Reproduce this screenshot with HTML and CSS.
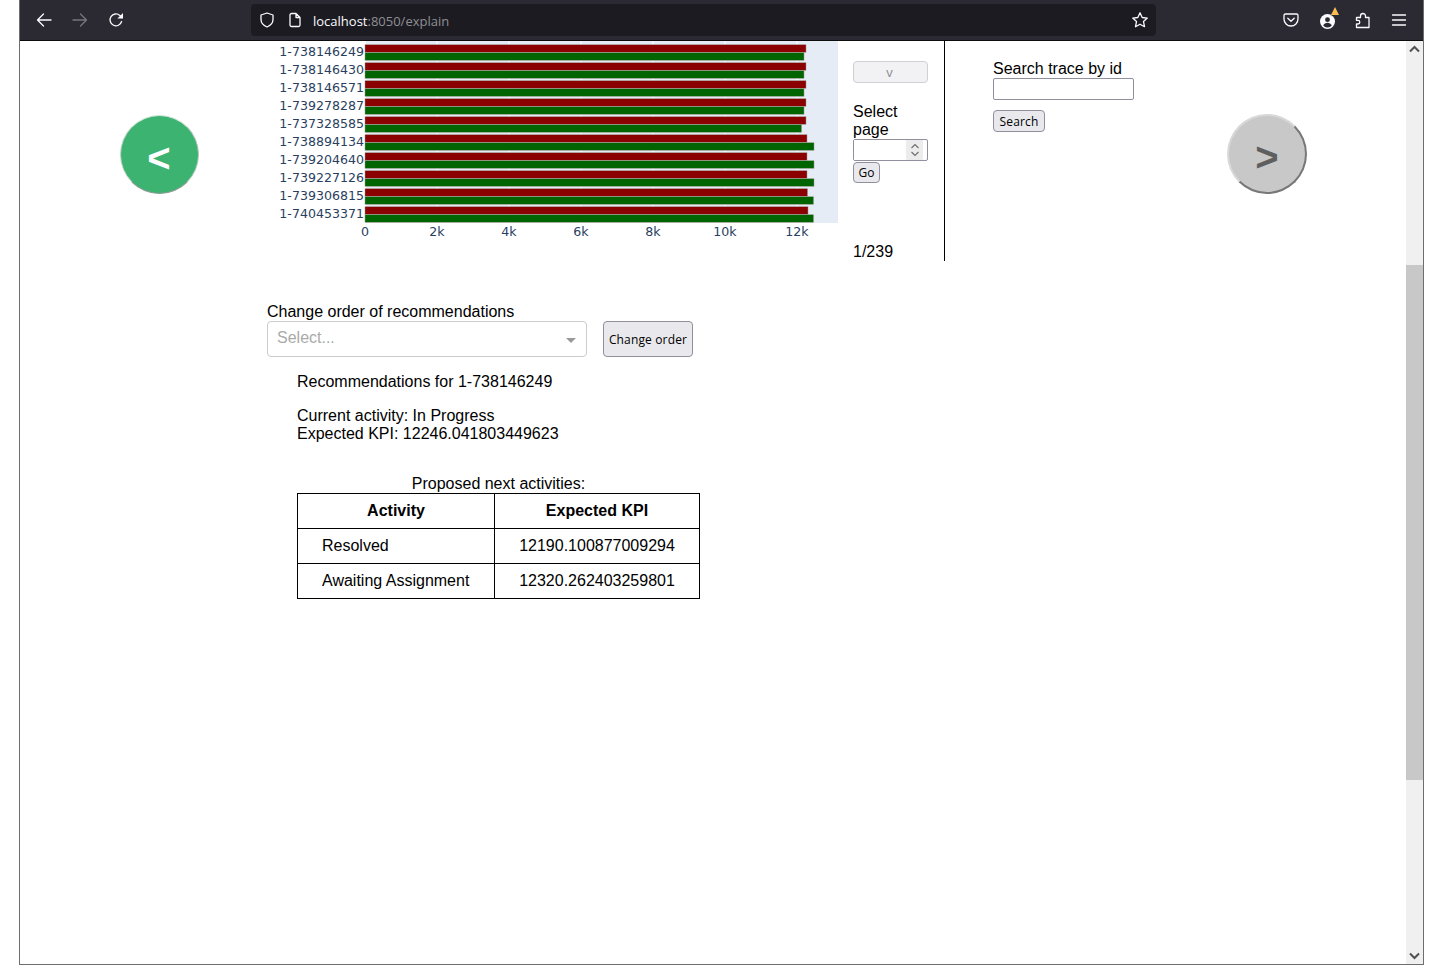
FILE: index.html
```html
<!DOCTYPE html>
<html>
<head>
  <title>localhost:8050/explain</title>
  <link rel="stylesheet" href="styles.css">
</head>
<body>
  <div class="window">
    <div class="toolbar">
      <div class="tool-btn"><svg width="16" height="16" viewBox="0 0 16 16"><path class="ico" d="M15 8H1.500M7.500 2L1.500 8l6 6"/></svg></div>
      <div class="tool-btn"><svg width="16" height="16" viewBox="0 0 16 16"><path class="ico dim" d="M1 8h13.500M8.500 2l6 6-6 6"/></svg></div>
      <div class="tool-btn"><svg width="16" height="16" viewBox="0 0 16 16"><path class="ico" d="M13.600 9.500A5.900 5.900 0 1 1 11.800 3.400L14 5.500"/><path class="ico-fill" d="M15 1v5.600H9.400z"/></svg></div>
      <div class="urlbar">
        <svg class="url-ico" width="16" height="16" viewBox="0 0 16 16"><path class="ico" d="M8 1L2 3v4.500c0 3.500 2.500 6 6 7.500 3.500-1.500 6-4 6-7.500V3z"/></svg>
        <svg class="url-ico page-ico" width="14" height="16" viewBox="0 0 14 16"><path class="ico" d="M3.500 1.500h4.500l4 4v7.500a1.500 1.500 0 0 1-1.500 1.500h-7A1.500 1.500 0 0 1 2 13V3a1.500 1.500 0 0 1 1.500-1.500zM8 1.500V5.500h4"/></svg>
        <span class="host">localhost</span><span class="path">:8050/explain</span>
        <svg class="star" width="18" height="18" viewBox="0 0 18 18"><path class="ico" d="M9 1.800l2.200 4.700 5.100.6-3.800 3.500 1 5.100L9 13.200l-4.500 2.500 1-5.100L1.700 7.100l5.100-.6z"/></svg>
      </div>
      <div class="tool-right">
        <div class="tool-btn"><svg width="16" height="16" viewBox="0 0 16 16"><path class="ico" d="M2.500 2h11A1.500 1.500 0 0 1 15 3.500V7a7 7 0 0 1-14 0V3.500A1.500 1.500 0 0 1 2.500 2z"/><path class="ico" d="M4.800 6.200L8 9.300l3.200-3.100"/></svg></div>
        <div class="tool-btn badge-wrap">
          <svg class="account" width="15" height="15" viewBox="0 0 16 16"><circle cx="8" cy="8" r="8" fill="#fbfbfe"/><circle cx="8" cy="6" r="2.600" fill="#2b2a33"/><path d="M3.400 12.300c1-2.200 2.700-3 4.600-3s3.600.8 4.600 3A6 6 0 0 1 8 14.300a6 6 0 0 1-4.600-2z" fill="#2b2a33"/></svg>
          <span class="badge"></span>
        </div>
        <div class="tool-btn"><svg width="16" height="17" viewBox="0 0 16 17"><path class="ico" d="M1.500 5.500h4V4a2.500 2.500 0 0 1 5 0v1.500H14v10H1.500V12H3a1.800 1.800 0 0 0 0-3.600H1.500z"/></svg></div>
        <div class="tool-btn"><svg width="16" height="16" viewBox="0 0 16 16"><path class="ico" d="M1.500 3h13M1.500 8h13M1.500 13h13"/></svg></div>
      </div>
    </div>

    <div class="viewport">
      <div class="page">
        <div class="top-row">
          <div class="nav-cell nav-left">
            <button class="round-btn prev">&lt;</button>
          </div>

          <svg class="chart" width="578" height="220" viewBox="0 0 578 220">
            <rect class="plot-bg" x="105" y="0" width="473" height="182"/>
            <path class="grid" d="M177 0v182M249 0v182M321 0v182M393 0v182M465 0v182M537 0v182"/>
            <path class="zero" d="M105 0v182"/>

            <rect class="bar-red" x="105" y="3.750" width="441" height="7.500"/>
            <rect class="bar-green" x="105" y="11.750" width="439" height="7.500"/>
            <rect class="bar-red" x="105" y="21.750" width="441" height="7.500"/>
            <rect class="bar-green" x="105" y="29.750" width="439" height="7.500"/>
            <rect class="bar-red" x="105" y="39.750" width="441" height="7.500"/>
            <rect class="bar-green" x="105" y="47.750" width="439" height="7.500"/>
            <rect class="bar-red" x="105" y="57.750" width="441" height="7.500"/>
            <rect class="bar-green" x="105" y="65.750" width="439" height="7.500"/>
            <rect class="bar-red" x="105" y="75.750" width="441" height="7.500"/>
            <rect class="bar-green" x="105" y="83.750" width="436.500" height="7.500"/>
            <rect class="bar-red" x="105" y="93.750" width="442" height="7.500"/>
            <rect class="bar-green" x="105" y="101.750" width="449" height="7.500"/>
            <rect class="bar-red" x="105" y="111.750" width="442" height="7.500"/>
            <rect class="bar-green" x="105" y="119.750" width="449" height="7.500"/>
            <rect class="bar-red" x="105" y="129.750" width="442" height="7.500"/>
            <rect class="bar-green" x="105" y="137.750" width="449" height="7.500"/>
            <rect class="bar-red" x="105" y="147.750" width="442.500" height="7.500"/>
            <rect class="bar-green" x="105" y="155.750" width="448.500" height="7.500"/>
            <rect class="bar-red" x="105" y="165.750" width="443" height="7.500"/>
            <rect class="bar-green" x="105" y="173.750" width="448.500" height="7.500"/>

            <g class="tick-y">
              <text x="104" y="15">1-738146249</text>
              <text x="104" y="33">1-738146430</text>
              <text x="104" y="51">1-738146571</text>
              <text x="104" y="69">1-739278287</text>
              <text x="104" y="87">1-737328585</text>
              <text x="104" y="105">1-738894134</text>
              <text x="104" y="123">1-739204640</text>
              <text x="104" y="141">1-739227126</text>
              <text x="104" y="159">1-739306815</text>
              <text x="104" y="177">1-740453371</text>
            </g>
            <g class="tick-x">
              <text x="105" y="195">0</text>
              <text x="177" y="195">2k</text>
              <text x="249" y="195">4k</text>
              <text x="321" y="195">6k</text>
              <text x="393" y="195">8k</text>
              <text x="465" y="195">10k</text>
              <text x="537" y="195">12k</text>
            </g>
          </svg>

          <div class="pager">
            <button class="btn page-down" disabled>v</button>
            <div class="pager-label">Select page</div>
            <div class="number-box">
              <input class="number-input" type="text">
              <div class="spinner">
                <svg width="10" height="16" viewBox="0 0 10 16"><path d="M1.500 6L5 2.500 8.500 6M1.500 10L5 13.500 8.500 10"/></svg>
              </div>
            </div>
            <button class="btn go-btn">Go</button>
            <div class="page-count">1/239</div>
          </div>

          <div class="search">
            <label class="search-label">Search trace by id</label>
            <input class="search-input" type="text">
            <button class="btn search-btn">Search</button>
          </div>

          <div class="nav-cell nav-right">
            <button class="round-btn next">&gt;</button>
          </div>
        </div>

        <div class="recs">
          <div class="order-label">Change order of recommendations</div>
          <div class="order-row">
            <div class="select-box">
              <span class="select-text">Select...</span>
              <span class="select-caret"></span>
            </div>
            <button class="btn order-btn">Change order</button>
          </div>

          <div class="rec-body">
            <p class="rec-title">Recommendations for 1-738146249</p>
            <p class="rec-info">Current activity: In Progress<br>Expected KPI: 12246.041803449623</p>
            <table class="rec-table">
              <caption>Proposed next activities:</caption>
              <tr><th class="col-activity">Activity</th><th>Expected KPI</th></tr>
              <tr><td class="cell-activity">Resolved</td><td>12190.100877009294</td></tr>
              <tr><td class="cell-activity">Awaiting Assignment</td><td>12320.262403259801</td></tr>
            </table>
          </div>
        </div>
      </div>

      <div class="scrollbar">
        <svg class="arrow" width="17" height="17" viewBox="0 0 17 17"><path d="M4 10.500l4.500-4.500 4.500 4.500"/></svg>
        <div class="track">
          <div class="thumb"></div>
        </div>
        <svg class="arrow" width="17" height="17" viewBox="0 0 17 17"><path d="M4 6.500l4.500 4.500 4.500-4.500"/></svg>
      </div>
    </div>
  </div>
</body>
</html>
```

FILE: styles.css
```css
html, body {
  margin: 0;
  padding: 0;
  background-color: #FFF;
  overflow: hidden;
}

body {
  height: 970px;
  font-family: "Liberation Sans", Arial, sans-serif;
  font-size: 16px;
  line-height: 18px;
  color: #000;
}

.window {
  width: 1403px;
  height: 964px;
  margin-left: 19px;
  border: 1px solid #6e6e6e;
  border-top: none;
  display: flex;
  flex-direction: column;
}

/* browser toolbar */
.toolbar {
  height: 40px;
  flex: none;
  background-color: #2b2a33;
  border-bottom: 1px solid #0c0c0d;
  display: flex;
  align-items: center;
  padding-left: 6px;
  padding-right: 6px;
}

.tool-btn {
  width: 36px;
  height: 32px;
  display: flex;
  align-items: center;
  justify-content: center;
  position: relative;
}

.ico {
  fill: none;
  stroke: #fbfbfe;
  stroke-width: 1.3;
  stroke-linejoin: round;
  stroke-linecap: round;
}

.ico.dim {
  stroke: #77767d;
}

.ico-fill {
  fill: #fbfbfe;
}

.urlbar {
  width: 905px;
  height: 32px;
  margin-left: 117px;
  border-radius: 4px;
  background-color: #1c1b22;
  display: flex;
  align-items: center;
  padding-left: 8px;
  box-sizing: border-box;
  font-family: "Open Sans", sans-serif;
  font-size: 13px;
}

.url-ico {
  flex: none;
}

.page-ico {
  margin-left: 13px;
  margin-right: 11px;
}

.host {
  color: #fbfbfe;
  padding-top: 2px;
}

.path {
  color: #8f8f94;
  padding-top: 2px;
}

.star {
  margin-left: auto;
  margin-right: 7px;
}

.tool-right {
  margin-left: auto;
  display: flex;
}

.account {
  margin-top: 2px;
}

.badge {
  position: absolute;
  top: 3px;
  right: 6px;
  width: 0;
  height: 0;
  border-left: 4px solid transparent;
  border-right: 4px solid transparent;
  border-bottom: 8px solid #ffbd4f;
  filter: drop-shadow(0 0 1px #2b2a33);
}

/* page area */
.viewport {
  flex: 1;
  display: flex;
  min-height: 0;
}

.page {
  flex: 1;
  min-width: 0;
}

.top-row {
  display: grid;
  grid-template-columns: 240px 578px 107px 282px 1fr;
  height: 220px;
}

.nav-cell {
  padding-top: 74px;
}

.nav-left {
  padding-left: 99.500px;
}

.nav-right {
  padding-top: 73px;
}

.round-btn {
  border-radius: 50%;
  border-style: solid;
  padding: 6px 0 0 0;
  font-family: "Liberation Sans", Arial, sans-serif;
  font-size: 40px;
  font-weight: bold;
  line-height: 1;
  box-sizing: border-box;
}

.prev {
  width: 79px;
  height: 79px;
  border-width: 1.500px;
  background-color: #3cb371;
  border-color: #d5e5da #b8c6bd #8f9a94 #c4d4ca;
  color: #FFF;
}

.next {
  width: 80px;
  height: 80px;
  border-width: 2px;
  background-color: #c8c8c8;
  border-color: #d8d8d8 #777 #777 #d8d8d8;
  color: #5f5f5f;
}

/* chart */
.chart {
  display: block;
}

.plot-bg {
  fill: #e5ecf6;
}

.grid {
  stroke: #FFF;
  stroke-width: 1;
  fill: none;
}

.zero {
  stroke: #FFF;
  stroke-width: 2;
  fill: none;
}

.bar-red {
  fill: #8b0000;
  stroke: #9a9488;
  stroke-width: 0.5;
}

.bar-green {
  fill: #006400;
  stroke: #9a9488;
  stroke-width: 0.5;
}

.tick-y text,
.tick-x text {
  font-family: "DejaVu Sans", Verdana, sans-serif;
  font-size: 12.6px;
  fill: #2a3f5f;
}

.tick-y text {
  text-anchor: end;
}

.tick-x text {
  text-anchor: middle;
}

/* buttons and inputs */
.btn {
  font-family: "Open Sans", sans-serif;
  font-size: 12px;
  letter-spacing: 0.15px;
  color: #000;
  background-color: #e9e9ed;
  border: 1px solid #8f8f9d;
  border-radius: 4px;
  padding: 0;
  box-sizing: border-box;
}

.pager {
  padding-left: 15px;
  border-right: 1px solid #000;
  height: 220px;
  box-sizing: border-box;
  padding-top: 20px;
}

.page-down {
  display: block;
  width: 75px;
  height: 22px;
  background-color: #f2f2f5;
  border-color: #cfcfd6;
  color: #8a8a8a;
  font-size: 13px;
  padding-right: 2px;
}

.pager-label {
  width: 60px;
  margin-top: 20px;
}

.number-box {
  width: 75px;
  height: 22px;
  border: 1px solid #8f8f9d;
  border-radius: 2px;
  box-sizing: border-box;
  display: flex;
  background-color: #FFF;
}

.number-input {
  flex: 1;
  min-width: 0;
  border: none;
  padding: 0;
  outline: none;
}

.spinner {
  width: 17px;
  margin-right: 4px;
  background-color: #ececec;
  display: flex;
  align-items: center;
  justify-content: center;
}

.spinner path {
  fill: none;
  stroke: #6d6d6d;
  stroke-width: 1.1;
}

.go-btn {
  display: block;
  width: 27px;
  height: 21px;
  margin-top: 1px;
}

.page-count {
  margin-top: 60px;
}

.search {
  padding-left: 48px;
  padding-top: 19px;
}

.search-label {
  display: block;
}

.search-input {
  display: block;
  width: 141px;
  height: 22px;
  box-sizing: border-box;
  border: 1px solid #8f8f9d;
  border-radius: 2px;
  padding: 0;
  outline: none;
}

.search-btn {
  display: block;
  width: 52px;
  height: 22px;
  margin-top: 10px;
}

/* recommendations */
.recs {
  margin-left: 247px;
  padding-top: 42px;
}

.order-row {
  display: flex;
  gap: 16px;
}

.select-box {
  width: 320px;
  height: 36px;
  box-sizing: border-box;
  border: 1px solid #ccc;
  border-radius: 4px;
  display: flex;
  align-items: center;
  justify-content: space-between;
  padding: 0 10px 2px 9px;
}

.select-text {
  color: #aaa;
}

.select-caret {
  width: 0;
  height: 0;
  margin-top: 4px;
  border-left: 5px solid transparent;
  border-right: 5px solid transparent;
  border-top: 5px solid #999;
}

.order-btn {
  width: 90px;
  height: 36px;
}

.rec-body {
  margin-left: 30px;
  padding-top: 16px;
}

.rec-title {
  margin: 0;
}

.rec-info {
  margin: 16px 0 0 0;
}

.rec-table {
  margin-top: 32px;
  border-collapse: collapse;
  table-layout: fixed;
  width: 403px;
}

.rec-table caption {
  height: 18px;
}

.rec-table th,
.rec-table td {
  border: 1px solid #000;
  height: 34px;
  padding: 0;
  text-align: center;
}

.col-activity {
  width: 196px;
}

.rec-table .cell-activity {
  text-align: left;
  padding-left: 24px;
}

/* scrollbar */
.scrollbar {
  width: 17px;
  flex: none;
  background-color: #f0f0f0;
  display: flex;
  flex-direction: column;
}

.arrow {
  flex: none;
}

.arrow path {
  fill: none;
  stroke: #505050;
  stroke-width: 2;
}

.track {
  flex: 1;
  padding-top: 207px;
}

.thumb {
  height: 515px;
  background-color: #c8c8c8;
}
```
